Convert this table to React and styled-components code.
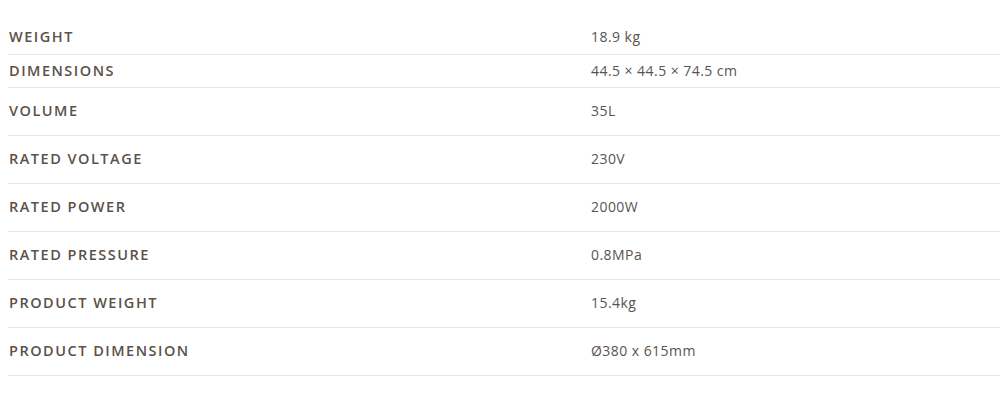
import React from "react";
import styled, { createGlobalStyle } from "styled-components";

const Global = createGlobalStyle`
  body { margin: 0; background: #fff; }
`;

const Table = styled.div`
  margin: 20px 0 0 8px;
  width: 992px;
  display: flex;
  flex-direction: column;
`;

const Row = styled.div`
  display: grid;
  grid-template-columns: 583px 1fr;
  align-items: center;
  height: ${(p) => p.$h}px;
  padding-bottom: 2px;
  border-bottom: 1px solid #e6e6e6;
  box-sizing: border-box;
`;

const Label = styled.div`
  padding-left: 1px;
  font-family: "Open Sans", sans-serif;
  font-weight: 600;
  font-size: 14.5px;
  letter-spacing: 1.5px;
  color: #5b514a;
  text-transform: uppercase;
`;

const Value = styled.div`
  font-family: "Open Sans", sans-serif;
  font-size: 14px;
  letter-spacing: 0.45px;
  color: #5a5450;
`;

const rows = [
  ["Weight", "18.9 kg", 35],
  ["Dimensions", "44.5 × 44.5 × 74.5 cm", 33],
  ["Volume", "35L", 48],
  ["Rated Voltage", "230V", 48],
  ["Rated Power", "2000W", 48],
  ["Rated Pressure", "0.8MPa", 48],
  ["Product Weight", "15.4kg", 48],
  ["Product Dimension", "Ø380 x 615mm", 48],
];

export default function App() {
  return (
    <>
      <Global />
      <Table>
        {rows.map(([l, v, h]) => (
          <Row key={l} $h={h}>
            <Label>{l}</Label>
            <Value>{v}</Value>
          </Row>
        ))}
      </Table>
    </>
  );
}
